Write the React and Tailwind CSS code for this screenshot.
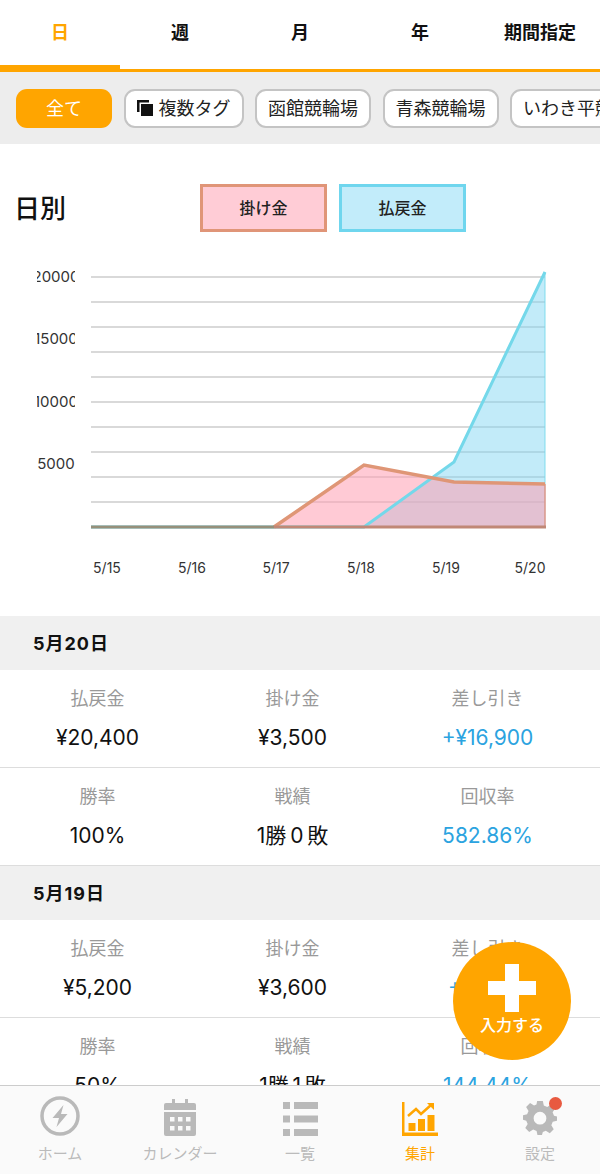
const FONT = "font-['Inter','Noto_Sans_CJK_JP',sans-serif]";

function Chart() {
  const gy = [277, 302, 327, 352, 377, 402, 427, 452, 477, 502];
  const xl = [[107, '5/15'], [192, '5/16'], [276, '5/17'], [361, '5/18'], [446, '5/19'], [530, '5/20']];
  const yl = [[276, '20000'], [338, '15000'], [401, '10000'], [463, '5000']];
  const off = 260;
  return (
    <svg width="600" height="330" viewBox={`0 ${off} 600 330`} className="block">
      <defs>
        <clipPath id="yc"><rect x="37" y={off} width="38" height="330" /></clipPath>
      </defs>
      {gy.map((y) => <line key={y} x1="91" x2="545" y1={y} y2={y} stroke="#cdcdcd" strokeWidth="1.5" />)}
      <g clipPath="url(#yc)">
        {yl.map(([y, s]) => (
          <text key={s} x="56" y={y + 6} textAnchor="middle" fontSize="15" fill="#333" fontFamily="Inter, sans-serif">{s}</text>
        ))}
      </g>
      {xl.map(([x, s]) => (
        <text key={s} x={x} y="573" textAnchor="middle" fontSize="14" fill="#333" fontFamily="Inter, sans-serif">{s}</text>
      ))}
      <polygon points="364,527 454,462 545,272 545,527" fill="#7fd5f2" fillOpacity="0.48" />
      <polygon points="274,527 364,465 454,482 545,484 545,527" fill="#ff9fb2" fillOpacity="0.55" />
      <polyline points="91,527 364,527 454,462 545,272" fill="none" stroke="#74d8ea" strokeWidth="3" />
      <line x1="545" x2="545" y1="272" y2="484" stroke="#74d8ea" strokeOpacity="0.6" strokeWidth="1.5" />
      <line x1="545" x2="545" y1="484" y2="527" stroke="#d8978a" strokeWidth="1.5" />
      <polyline points="274,527 364,465 454,482 545,484" fill="none" stroke="#df9676" strokeWidth="3.5" />
      <line x1="91" x2="274" y1="527" y2="527" stroke="#96907a" strokeWidth="3" />
      <line x1="274" x2="546" y1="527" y2="527" stroke="#c08876" strokeWidth="3" />
    </svg>
  );
}

function Stat({ label, value, blue }) {
  return (
    <div className="flex flex-col items-center">
      <div className="h-[24px] text-[18px] leading-[24px] text-[#999]">{label}</div>
      <div className={`mt-[15px] h-[24px] text-[21px] leading-[24px] whitespace-nowrap ${blue ? 'text-[#2ba3e0]' : 'text-[#111]'}`}>{value}</div>
    </div>
  );
}

function Row({ items }) {
  return (
    <div className="h-[98px] bg-white border-b-[1.5px] border-[#ddd] pt-[17px]">
      <div className="grid w-[585px] grid-cols-3">
        {items.map((i) => <Stat key={i[0]} label={i[0]} value={i[1]} blue={i[2]} />)}
      </div>
    </div>
  );
}

function Day({ date, rows }) {
  return (
    <div>
      <div className="flex h-[54px] items-center bg-[#f0f0f0] pl-[33px] text-[18px] tracking-[1px] font-bold text-[#111]">{date}</div>
      {rows.map((r, i) => <Row key={i} items={r} />)}
    </div>
  );
}

const Home = () => (
  <svg width="40" height="40" viewBox="0 0 40 40">
    <circle cx="20" cy="20" r="18" fill="none" stroke="#b9b9b9" strokeWidth="3.5" />
    <path d="M23.5 9 L12.5 22 H19 L16.5 31 L27.5 18 H21 Z" fill="#b9b9b9" />
  </svg>
);
const Cal = () => (
  <svg width="32" height="38" viewBox="0 0 32 38">
    <path d="M2 5 H8 V1 H11 V5 H21 V1 H24 V5 H30 Q32 5 32 7 V12 H0 V7 Q0 5 2 5 Z" fill="#b9b9b9" />
    <path d="M0 14 H32 V36 Q32 38 30 38 H2 Q0 38 0 36 Z" fill="#b9b9b9" />
    {[6, 14, 22].map((x) => [19, 28].map((y) => <rect key={x + '-' + y} x={x} y={y} width="4.5" height="4.5" fill="#fafafa" />))}
  </svg>
);
const List = () => (
  <svg width="35" height="34" viewBox="0 0 35 34">
    {[0, 13.5, 27].map((y) => (
      <g key={y} fill="#b9b9b9">
        <rect x="0" y={y} width="7" height="7" />
        <rect x="11" y={y} width="24" height="7" />
      </g>
    ))}
  </svg>
);
const Graph = () => (
  <svg width="36" height="34" viewBox="0 0 36 34">
    <path d="M0 0 H2.5 V30.5 H36 V34 H0 Z" fill="#ffa500" />
    <rect x="6.5" y="21" width="7" height="8" fill="#ffa500" />
    <rect x="16" y="17" width="7" height="12" fill="#ffa500" />
    <rect x="25.5" y="13" width="7" height="16" fill="#ffa500" />
    <path d="M6 14 L14 7 L19 12 L29 3" fill="none" stroke="#ffa500" strokeWidth="2.5" />
    <path d="M25 1 H32 V8 Z" fill="#ffa500" />
  </svg>
);
const Gear = () => (
  <svg width="34" height="36" viewBox="0 0 24 24">
    <path fillRule="evenodd" fill="#b9b9b9" d="M10 0 H14 L14.7 3.2 L17.1 4.2 L19.9 2.5 L22.7 5.3 L20.9 8 L21.9 10.4 L24 11 V14 L21 14.7 L20 17.1 L21.7 19.9 L18.9 22.7 L16.1 21 L14 21.9 L13.4 24 H10.2 L9.6 21.1 L7.2 20.1 L4.4 21.8 L1.6 19 L3.3 16.2 L2.3 13.9 L0 13.2 V10 L2.9 9.4 L3.9 7 L2.2 4.2 L5 1.4 L7.8 3.1 L9.5 2.4 Z M12 7.6 A4.5 4.5 0 1 0 12 16.6 A4.5 4.5 0 1 0 12 7.6 Z" />
  </svg>
);

function NavItem({ icon, label, active, dot }) {
  return (
    <div className="relative flex flex-col items-center">
      <div className="flex h-[46px] items-end justify-center">{icon}</div>
      <div className={`mt-[8px] text-[15px] leading-[20px] whitespace-nowrap ${active ? 'text-[#ffa500]' : 'text-[#bbb]'}`}>{label}</div>
      {dot && <div className="absolute left-[69px] top-[7px] h-[13px] w-[13px] rounded-full bg-[#e85a40]" />}
    </div>
  );
}

function Pill({ children }) {
  return (
    <div className="flex h-[39px] shrink-0 items-center rounded-[11px] border-2 border-[#c4c4c4] bg-white px-[11px] text-[18px] whitespace-nowrap text-[#222]">{children}</div>
  );
}

export default function App() {
  return (
    <div className={`relative flex h-[1174px] w-[600px] flex-col overflow-hidden bg-white ${FONT}`}>
      <div className="grid h-[72px] shrink-0 grid-cols-5 border-b-[3px] border-[#ffa500]">
        {['日', '週', '月', '年', '期間指定'].map((t, i) => (
          <div key={t} className={`flex items-start justify-center pt-[20px] text-[18px] leading-[26px] font-bold ${i === 0 ? 'h-[69px] border-b-[4px] border-[#ffa500] text-[#ffa500]' : 'text-[#111]'}`}>{t}</div>
        ))}
      </div>
      <div className="flex h-[72px] shrink-0 items-center gap-[11.5px] overflow-hidden bg-[#ededed] pl-[16px]">
        <div className="flex h-[39px] w-[96px] shrink-0 items-center justify-center rounded-[11px] bg-[#ffa500] text-[18px] text-white">全て</div>
        <Pill>
          <svg width="16" height="16" viewBox="0 0 16 16" className="mr-[6px]">
            <path d="M0 0 H12 V2.5 H2.5 V12 H0 Z" fill="#111" />
            <rect x="4" y="4" width="12" height="12" fill="#111" />
          </svg>
          複数タグ
        </Pill>
        <Pill>函館競輪場</Pill>
        <Pill>青森競輪場</Pill>
        <Pill>いわき平競輪場</Pill>
      </div>
      <div className="min-h-0 flex-1 overflow-hidden">
        <div className="h-[472px] pt-[40px]">
          <div className="flex h-[48px] items-center pl-[14px]">
            <div className="w-[186px] text-[26px] font-medium text-[#111]">日別</div>
            <div className="flex h-[48px] w-[127px] items-center justify-center border-[3px] border-[#e09578] bg-[#ffccd6] text-[16px] font-medium text-[#222]">掛け金</div>
            <div className="ml-[12px] flex h-[48px] w-[127px] items-center justify-center border-[3px] border-[#6fd6ee] bg-[#c2ecfa] text-[16px] font-medium text-[#222]">払戻金</div>
          </div>
          <div className="mt-[28px]"><Chart /></div>
        </div>
        <Day date="5月20日" rows={[
          [['払戻金', '¥20,400'], ['掛け金', '¥3,500'], ['差し引き', '+¥16,900', true]],
          [['勝率', '100%'], ['戦績', '1勝\u20090\u2009敗'], ['回収率', '582.86%', true]],
        ]} />
        <Day date="5月19日" rows={[
          [['払戻金', '¥5,200'], ['掛け金', '¥3,600'], ['差し引き', '+¥1,600', true]],
          [['勝率', '50%'], ['戦績', '1勝\u20091\u2009敗'], ['回収率', '144.44%', true]],
        ]} />
      </div>
      <div className="grid h-[89px] shrink-0 grid-cols-5 border-t-[1.5px] border-[#ccc] bg-[#fafafa] pt-[4px]">
        <NavItem icon={<Home />} label="ホーム" />
        <NavItem icon={<Cal />} label="カレンダー" />
        <NavItem icon={<List />} label="一覧" />
        <NavItem icon={<Graph />} label="集計" active />
        <NavItem icon={<Gear />} label="設定" dot />
      </div>
      <div className="absolute left-[453px] top-[942px] flex h-[118px] w-[118px] flex-col items-center rounded-full bg-[#ffa500] pt-[22px]">
        <svg width="48" height="48" viewBox="0 0 48 48">
          <path d="M17 0 H31 V17 H48 V31 H31 V48 H17 V31 H0 V17 H17 Z" fill="#fff" />
        </svg>
        <div className="mt-[3px] text-[16px] leading-[20px] font-medium text-white">入力する</div>
      </div>
    </div>
  );
}
